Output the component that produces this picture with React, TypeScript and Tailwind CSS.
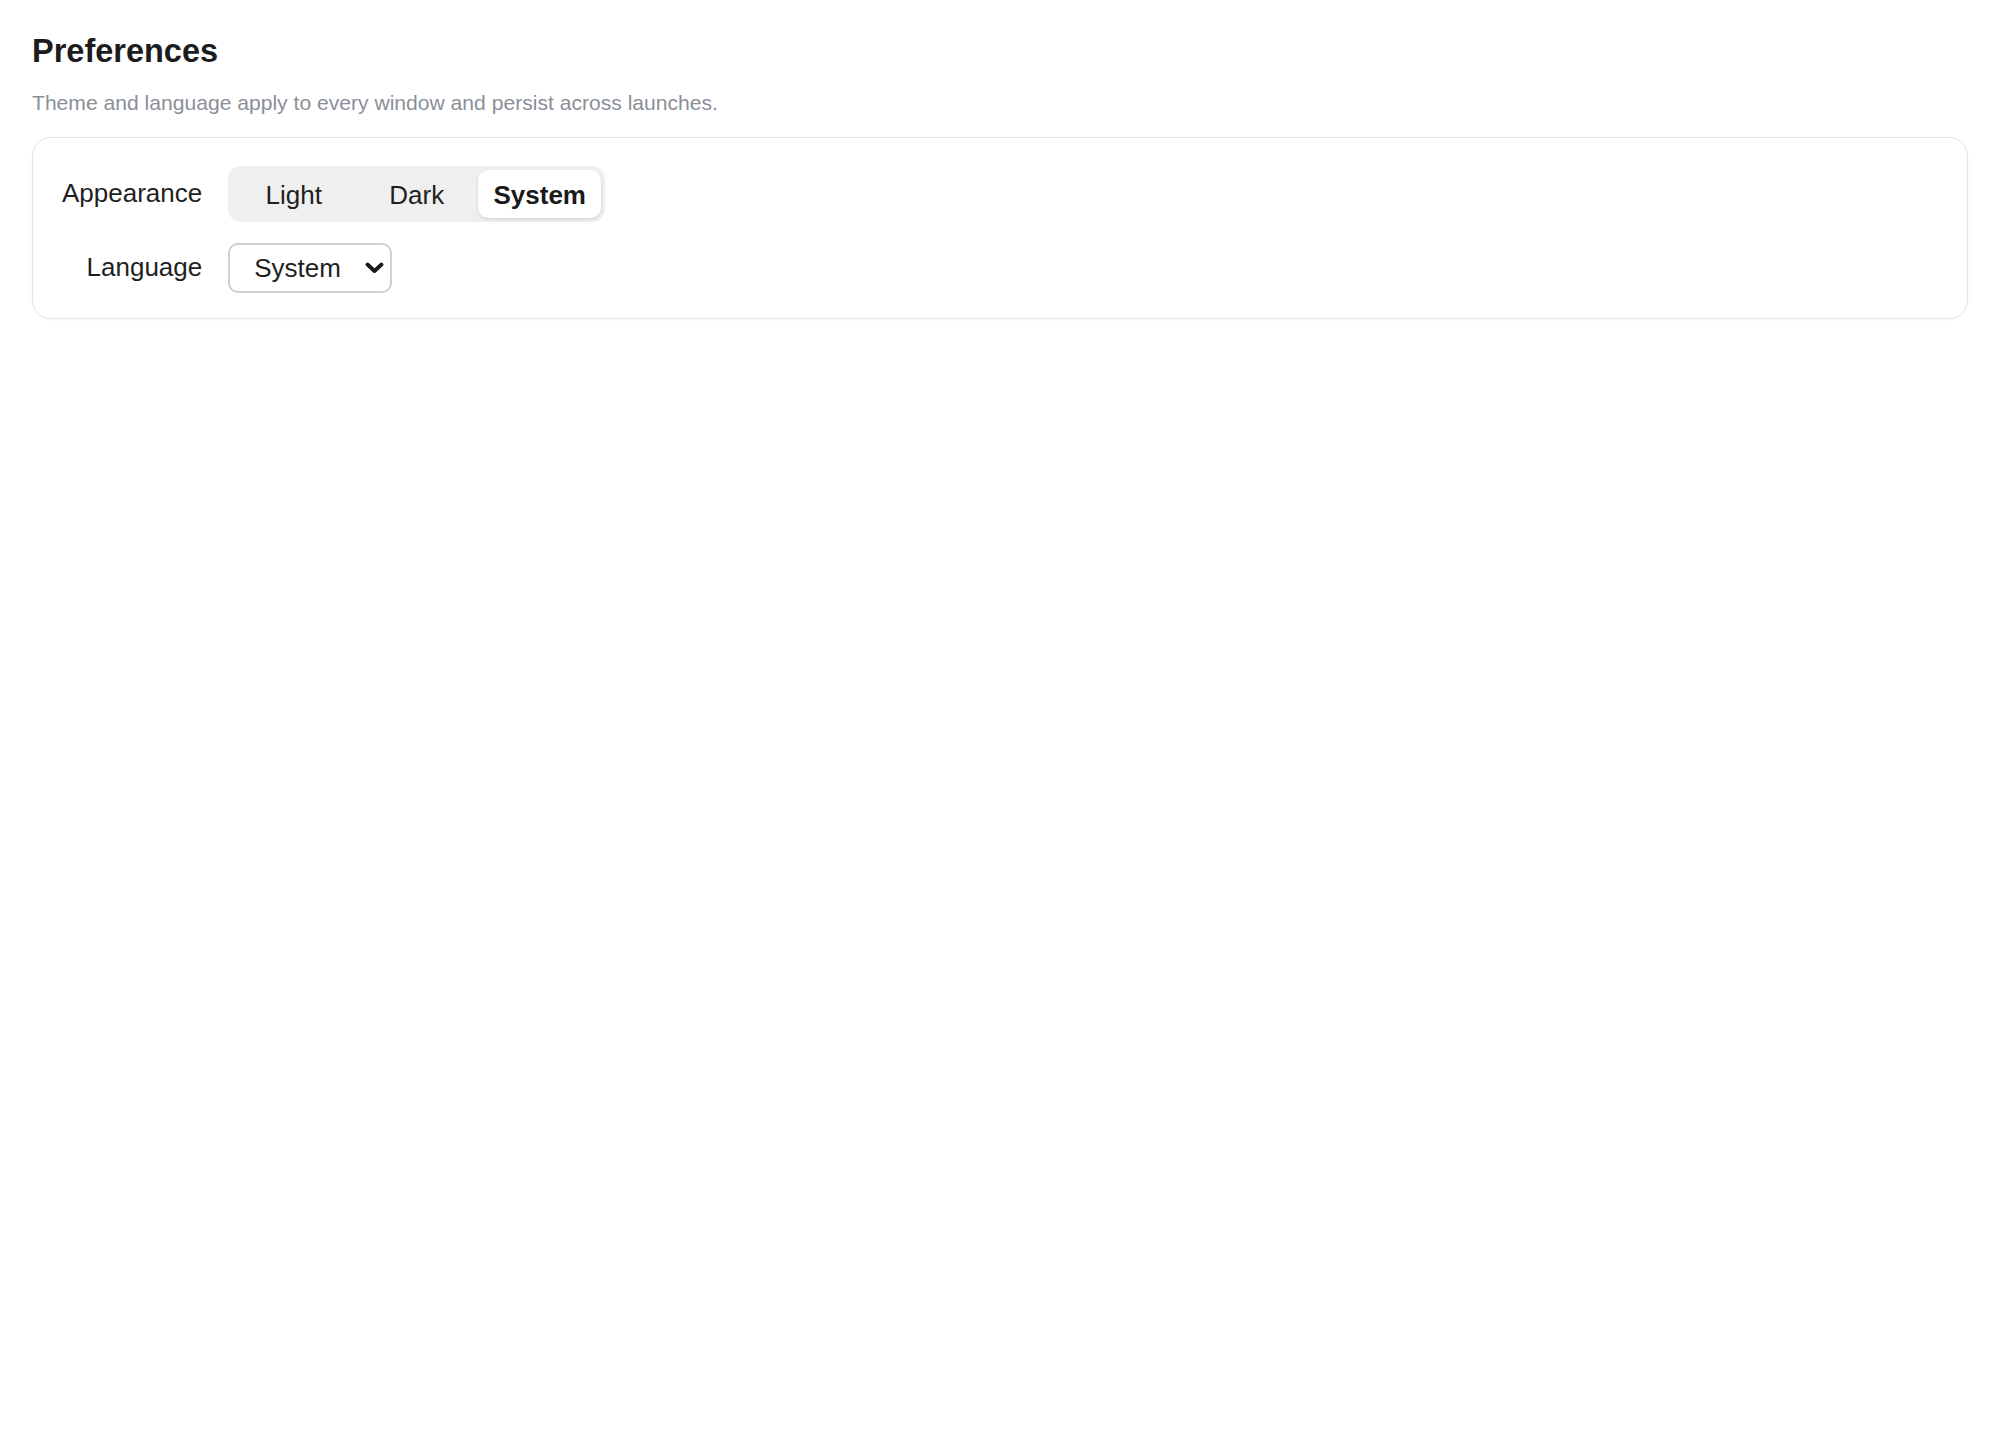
import { useState } from "react"

const themes = ["Light", "Dark", "System"] as const

function Chevron() {
  return (
    <svg width="19" height="12" viewBox="0 0 19 12" fill="none">
      <path d="M2.5 2.5 L9.5 9 L16.5 2.5" stroke="#1a1a1a" strokeWidth="3.8" strokeLinecap="round" strokeLinejoin="round" />
    </svg>
  )
}

export default function App() {
  const [theme, setTheme] = useState<(typeof themes)[number]>("System")

  return (
    <div className="min-h-screen bg-white px-8 pt-[33px] font-['Liberation_Sans',Arial,sans-serif]">
      <h1 className="text-[32.5px] font-bold leading-[1.15] text-[#1c1c1e]">Preferences</h1>
      <p className="mt-[21px] text-[21.1px] leading-[1.15] text-[#8a8f98]">
        Theme and language apply to every window and persist across launches.
      </p>

      <div className="mt-[21px] rounded-[19px] border border-[#e6e6e6] bg-white pb-[25px] pl-[29px] pr-[28px] pt-[28px] shadow-[0_1px_3px_rgba(0,0,0,0.05)]">
        <div className="grid grid-cols-[auto_auto] items-center justify-start gap-x-[26px] gap-y-[21px]">
          <span className="text-right text-[26px] text-[#1f1f1f]">Appearance</span>
          <div className="flex w-fit rounded-[13px] bg-[#efefef] p-[4px]">
            {themes.map((t) => (
              <button
                key={t}
                onClick={() => setTheme(t)}
                className={
                  t === theme
                    ? "h-[48px] w-[123px] rounded-[10px] bg-white pt-[3px] text-[26px] font-bold text-[#1a1a1a] shadow-[0_1px_3px_rgba(0,0,0,0.14)]"
                    : "h-[48px] w-[123px] rounded-[10px] pt-[3px] text-[26px] text-[#1f1f1f]"
                }
              >
                {t}
              </button>
            ))}
          </div>

          <span className="text-right text-[26px] text-[#1f1f1f]">Language</span>
          <div className="flex h-[50px] w-[164px] items-center justify-between rounded-[10px] border-2 border-[#cfcfcf] bg-white pl-[24px] pr-[6px]">
            <span className="pt-[2px] text-[26px] text-[#1f1f1f]">System</span>
            <Chevron />
          </div>
        </div>
      </div>
    </div>
  )
}
